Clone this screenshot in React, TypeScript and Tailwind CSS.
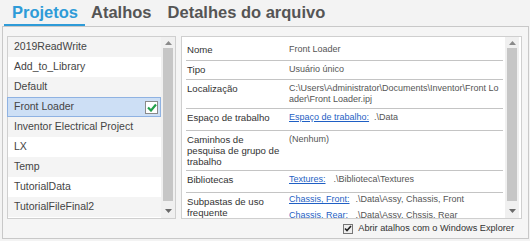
import React from "react";

const projects = [
  "2019ReadWrite",
  "Add_to_Library",
  "Default",
  "Front Loader",
  "Inventor Electrical Project",
  "LX",
  "Temp",
  "TutorialData",
  "TutorialFileFinal2",
];

const ArrowUp = () => (
  <svg width="7" height="4" viewBox="0 0 7 4">
    <path d="M0 4 L3.5 0 L7 4 Z" fill="#8a8a8a" />
  </svg>
);

const ArrowDown = () => (
  <svg width="7" height="4" viewBox="0 0 7 4">
    <path d="M0 0 L7 0 L3.5 4 Z" fill="#6a6a6a" />
  </svg>
);

function ScrollBar({ thumbTop, thumbHeight }: { thumbTop: number; thumbHeight: number }) {
  return (
    <div className="relative h-full w-[14px] bg-[#f0f0f0]">
      <div className="absolute left-0 right-0 top-[4px] flex justify-center">
        <ArrowUp />
      </div>
      <div
        className="absolute left-[2px] right-[2px] bg-[#c6c6c6]"
        style={{ top: thumbTop, height: thumbHeight }}
      />
      <div className="absolute left-0 right-0 bottom-[5px] flex justify-center">
        <ArrowDown />
      </div>
    </div>
  );
}

const App = () => {
  return (
    <div className="w-[530px] h-[241px] bg-[#f3f3f3] font-['Liberation_Sans',Arial,sans-serif] overflow-hidden">
      {/* tabs */}
      <div className="h-[26px] flex items-end pl-[4px]">
        <div className="h-[26px] pl-[8px] pr-[7px] border-b-2 border-[#2e9bd8] text-[16.5px] font-bold text-[#2e9bd8] leading-[24px]">
          Projetos
        </div>
        <div className="h-[26px] ml-[6px] text-[16.5px] font-bold text-[#555] leading-[24px]">Atalhos</div>
        <div className="h-[26px] ml-[16px] text-[16.5px] font-bold text-[#555] leading-[24px]">
          Detalhes do arquivo
        </div>
      </div>

      {/* main panel */}
      <div className="ml-[2px] w-[527px] h-[213px] border border-[#c8c8c8] bg-[#f5f5f5] flex flex-col">
        <div className="flex pt-[9px] pl-[4px]">
          {/* project list */}
          <div className="w-[169px] h-[183px] border border-[#cfcfcf] bg-white flex">
            <div className="flex-1 flex flex-col">
              {projects.map((p, i) => {
                const selected = p === "Front Loader";
                return (
                  <div
                    key={p}
                    className={
                      selected
                        ? "h-[20px] flex items-center justify-between pl-[6px] pr-[2px] bg-[#cddff5] border border-[#8fb2e2] -ml-[1px]"
                        : i % 2 === 0
                        ? "h-[20px] flex items-center pl-[6px] bg-[#f4f4f4]"
                        : "h-[20px] flex items-center pl-[6px] bg-white"
                    }
                  >
                    <span className="text-[10.5px] text-[#444] whitespace-nowrap">{p}</span>
                    {selected && (
                      <div className="w-[13px] h-[13px] bg-white border border-[#8a8a8a] flex items-center justify-center">
                        <svg width="10" height="9" viewBox="0 0 10 9">
                          <path d="M1 4.5 L4 7.5 L9 1.5" stroke="#22a04b" strokeWidth="2.2" fill="none" />
                        </svg>
                      </div>
                    )}
                  </div>
                );
              })}
            </div>
            <ScrollBar thumbTop={11} thumbHeight={153} />
          </div>

          {/* details */}
          <div className="ml-[5px] w-[341px] h-[183px] border border-[#cfcfcf] bg-white flex overflow-hidden">
            <div className="flex-1 ml-[4px] mr-[2px] mt-[4px] leading-[11px]">
              <div className="h-[20px] flex border-b border-[#c4c4c4] pt-[3px]">
                <div className="w-[103px] pl-[1px] text-[9.6px] text-[#333]">Nome</div>
                <div className="text-[9px] text-[#555]">Front Loader</div>
              </div>
              <div className="h-[19px] flex border-b border-[#c4c4c4] pt-[3px]">
                <div className="w-[103px] pl-[1px] text-[9.6px] text-[#333]">Tipo</div>
                <div className="text-[9px] text-[#555]">Usuário único</div>
              </div>
              <div className="h-[29px] flex border-b border-[#c4c4c4] pt-[3px]">
                <div className="w-[103px] pl-[1px] text-[9.6px] text-[#333]">Localização</div>
                <div className="text-[9px] text-[#555] whitespace-nowrap">
                  C:\Users\Administrator\Documents\Inventor\Front Lo
                  <br />
                  ader\Front Loader.ipj
                </div>
              </div>
              <div className="h-[22px] flex border-b border-[#c4c4c4] pt-[3px]">
                <div className="w-[103px] pl-[1px] text-[9.6px] text-[#333]">Espaço de trabalho</div>
                <div className="flex gap-[5px] text-[9px] whitespace-nowrap">
                  <span className="text-[#1f5fc4] underline">Espaço de trabalho:</span>
                  <span className="text-[#555]">.\Data</span>
                </div>
              </div>
              <div className="h-[40px] flex border-b border-[#c4c4c4] pt-[3px]">
                <div className="w-[103px] pl-[1px] text-[9.6px] text-[#333]">
                  Caminhos de
                  <br />
                  pesquisa de grupo de
                  <br />
                  trabalho
                </div>
                <div className="text-[9px] text-[#555]">(Nenhum)</div>
              </div>
              <div className="h-[22px] flex border-b border-[#c4c4c4] pt-[3px]">
                <div className="w-[103px] pl-[1px] text-[9.6px] text-[#333]">Bibliotecas</div>
                <div className="flex gap-[8px] text-[9px] whitespace-nowrap">
                  <span className="text-[#1f5fc4] underline">Textures:</span>
                  <span className="text-[#555]">.\Biblioteca\Textures</span>
                </div>
              </div>
              <div className="h-[30px] flex pt-[3px]">
                <div className="w-[103px] pl-[1px] text-[9.6px] text-[#333]">
                  Subpastas de uso
                  <br />
                  frequente
                </div>
                <div className="-mt-[4px] grid grid-cols-[auto_auto] gap-x-[6px] text-[9px] leading-[14px] whitespace-nowrap">
                  <span className="text-[#1f5fc4] underline">Chassis, Front:</span>
                  <span className="text-[#555]">.\Data\Assy, Chassis, Front</span>
                  <span className="text-[#1f5fc4] underline">Chassis, Rear:</span>
                  <span className="text-[#555]">.\Data\Assy, Chssis, Rear</span>
                </div>
              </div>
            </div>
            <div className="mr-[2px]">
              <ScrollBar thumbTop={11} thumbHeight={153} />
            </div>
          </div>
        </div>

        {/* bottom option */}
        <div className="flex-1 flex items-center justify-end pr-[14px]">
          <div className="w-[10px] h-[10px] border border-[#777] bg-[#eee] flex items-center justify-center">
            <svg width="8" height="7" viewBox="0 0 8 7">
              <path d="M1 3.5 L3 5.5 L7 1" stroke="#222" strokeWidth="1.6" fill="none" />
            </svg>
          </div>
          <span className="ml-[5px] text-[9.2px] text-[#333] whitespace-nowrap">
            Abrir atalhos com o Windows Explorer
          </span>
        </div>
      </div>
    </div>
  );
};

export default App;
